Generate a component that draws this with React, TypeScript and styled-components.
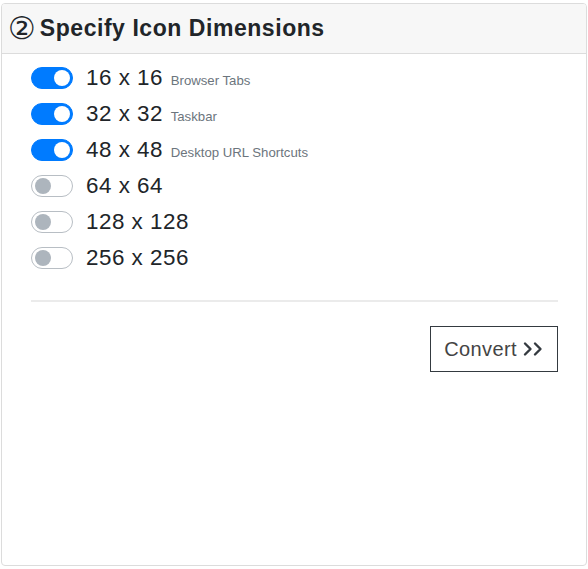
import styled, { createGlobalStyle } from 'styled-components'

const GlobalStyle = createGlobalStyle`
  body {
    margin: 0;
    padding: 3px 1px 0 1px;
    background: #fff;
    font-family: "Liberation Sans", Arial, sans-serif;
    color: #212529;
  }
`

const Card = styled.div`
  width: 586px;
  height: 563px;
  box-sizing: border-box;
  border: 1px solid #dcdcdc;
  border-radius: 4px;
  overflow: hidden;
`

const CardHeader = styled.div`
  height: 50px;
  box-sizing: border-box;
  padding: 0 6px;
  display: flex;
  align-items: center;
  background: #f7f7f7;
  border-bottom: 1px solid #dcdcdc;
`

const Title = styled.h2`
  margin: 0;
  font-size: 23px;
  font-weight: 700;
  letter-spacing: 0.55px;
  color: #212529;
  display: flex;
  align-items: center;
`

const StepNumber = styled.span`
  font-family: "DejaVu Sans", sans-serif;
  font-size: 31px;
  font-weight: 400;
  letter-spacing: 0;
  line-height: 1;
  margin-right: 4px;
`

const CardBody = styled.div`
  padding: 6px 28px 0 29px;
`

const SizeList = styled.div`
  display: flex;
  flex-direction: column;
`

const SizeRow = styled.label`
  height: 36px;
  display: flex;
  align-items: center;
  gap: 13px;
`

const Switch = styled.span<{ $on: boolean }>`
  position: relative;
  width: 42px;
  height: 22px;
  box-sizing: border-box;
  border-radius: 11px;
  border: 1px solid ${(p) => (p.$on ? '#007bff' : '#b8bec4')};
  background: ${(p) => (p.$on ? '#007bff' : '#fff')};
  flex-shrink: 0;

  &::after {
    content: '';
    position: absolute;
    top: 2px;
    left: ${(p) => (p.$on ? '22px' : '3px')};
    width: 16px;
    height: 16px;
    border-radius: 50%;
    background: ${(p) => (p.$on ? '#fff' : '#adb5bd')};
  }
`

const SizeText = styled.span`
  font-size: 22.4px;
  letter-spacing: 0.5px;
  color: #212529;
  white-space: nowrap;
`

const Hint = styled.small`
  font-size: 13.2px;
  letter-spacing: 0;
  color: #6c757d;
  margin-left: 1px;
`

const Divider = styled.hr`
  margin: 24px 0 0 0;
  border: 0;
  border-top: 2px solid #ebebeb;
`

const Actions = styled.div`
  display: flex;
  justify-content: flex-end;
  padding-top: 24px;
`

const ConvertButton = styled.button`
  height: 46px;
  padding: 0 12px 0 13px;
  background: #fff;
  border: 1px solid #343a40;
  border-radius: 0;
  font-family: "Liberation Sans", Arial, sans-serif;
  font-size: 20px;
  letter-spacing: 0.4px;
  color: #444;
  display: flex;
  align-items: center;
  gap: 6px;
`

const sizes = [
  { size: 16, hint: 'Browser Tabs', on: true },
  { size: 32, hint: 'Taskbar', on: true },
  { size: 48, hint: 'Desktop URL Shortcuts', on: true },
  { size: 64, on: false },
  { size: 128, on: false },
  { size: 256, on: false },
]

const Chevrons = () => (
  <svg width="22" height="16" viewBox="0 0 22 16" fill="none" stroke="#343a40" strokeWidth="2.4" strokeLinecap="round" strokeLinejoin="round">
    <path d="M2 2.5 L7.5 8 L2 13.5" />
    <path d="M12 2.5 L17.5 8 L12 13.5" />
  </svg>
)

export default function App() {
  return (
    <>
      <GlobalStyle />
      <Card>
        <CardHeader>
          <Title>
            <StepNumber>②</StepNumber>Specify Icon Dimensions
          </Title>
        </CardHeader>
        <CardBody>
          <SizeList>
            {sizes.map((s) => (
              <SizeRow key={s.size}>
                <Switch $on={s.on} />
                <SizeText>
                  {s.size} x {s.size} {s.hint && <Hint>{s.hint}</Hint>}
                </SizeText>
              </SizeRow>
            ))}
          </SizeList>
          <Divider />
          <Actions>
            <ConvertButton>
              Convert <Chevrons />
            </ConvertButton>
          </Actions>
        </CardBody>
      </Card>
    </>
  )
}
